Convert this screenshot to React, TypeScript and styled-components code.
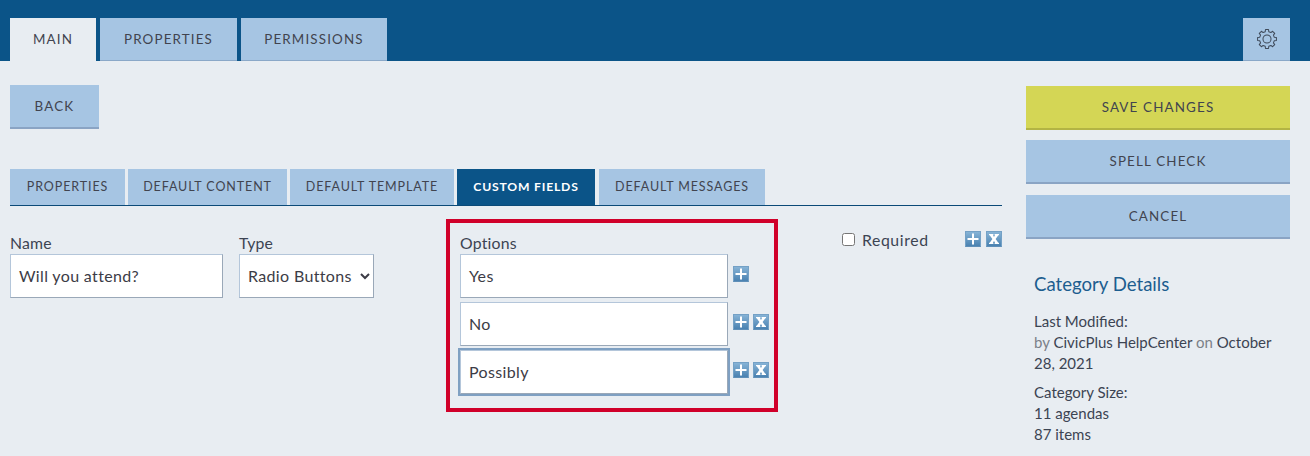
import React from "react";
import styled, { createGlobalStyle } from "styled-components";

const Global = createGlobalStyle`
  html, body { margin: 0; padding: 0; background: #e8edf2; }
  body { font-family: "Lato", "Open Sans", sans-serif; color: #3c3c46; }
  * { box-sizing: border-box; }
`;

const Page = styled.div`
  width: 1310px;
  height: 456px;
  overflow: hidden;
  background: #e8edf2;
`;

const Header = styled.header`
  height: 61px;
  background: #0b5488;
  padding: 18px 20px 0 10px;
  display: flex;
  align-items: flex-end;
  gap: 4px;
`;

const TopTab = styled.div<{ $active?: boolean; $w: number }>`
  height: 43px;
  width: ${(p) => p.$w}px;
  display: flex;
  align-items: center;
  justify-content: center;
  font-size: 13.4px;
  letter-spacing: 1.15px;
  color: #41444f;
  background: ${(p) => (p.$active ? "#e8edf2" : "#a6c5e3")};
  border-bottom: 1px solid ${(p) => (p.$active ? "#e8edf2" : "#8aa8c8")};
`;

const GearTab = styled.div`
  margin-left: auto;
  width: 47px;
  height: 43px;
  display: flex;
  align-items: center;
  justify-content: center;
  background: #a6c5e3;
  border-bottom: 1px solid #8aa8c8;
  color: #3f4a5a;
`;

const Content = styled.div`
  display: flex;
  padding: 24px 20px 0 10px;
`;

const Main = styled.main`
  width: 992px;
`;

const Side = styled.aside`
  margin-left: 24px;
  width: 264px;
  padding-top: 1px;
  display: flex;
  flex-direction: column;
`;

const ActionButton = styled.div<{ $tone?: string; $w?: number; $mb?: number }>`
  height: 44px;
  width: ${(p) => (p.$w ? `${p.$w}px` : "100%")};
  margin-bottom: ${(p) => p.$mb ?? 0}px;
  display: flex;
  align-items: center;
  justify-content: center;
  font-size: 13.4px;
  letter-spacing: 1.15px;
  color: #41444f;
  background: ${(p) => (p.$tone === "save" ? "#d4d655" : "#a6c5e3")};
  border-bottom: 2px solid ${(p) => (p.$tone === "save" ? "#b3b444" : "#8aa4c4")};
`;

const SubTabs = styled.div`
  margin-top: 40px;
  display: flex;
  gap: 3px;
  height: 37px;
  border-bottom: 1px solid #0b4a78;
`;

const SubTab = styled.div<{ $w: number; $active?: boolean; $ml?: number }>`
  height: 36px;
  width: ${(p) => p.$w}px;
  margin-left: ${(p) => p.$ml ?? 0}px;
  padding-bottom: 2px;
  display: flex;
  align-items: center;
  justify-content: center;
  font-size: ${(p) => (p.$active ? "12.2px" : "12.5px")};
  letter-spacing: ${(p) => (p.$active ? "0.8px" : "0.9px")};
  font-weight: ${(p) => (p.$active ? 700 : 400)};
  color: ${(p) => (p.$active ? "#ffffff" : "#41444f")};
  background: ${(p) => (p.$active ? "#0b5488" : "#a6c5e3")};
`;

const Fields = styled.div`
  display: flex;
  align-items: flex-start;
  margin-top: 13px;
`;

const Column = styled.div<{ $w: number; $ml?: number }>`
  width: ${(p) => p.$w}px;
  margin-left: ${(p) => p.$ml ?? 0}px;
  padding-top: 13px;
`;

const Label = styled.div`
  font-size: 15.8px;
  letter-spacing: 0.2px;
  line-height: 22px;
  color: #3c4452;
`;

const TextBox = styled.div<{ $focus?: boolean }>`
  height: 44px;
  width: 100%;
  background: #fff;
  display: flex;
  align-items: center;
  padding: 0 0 2px 8px;
  font-size: 16px;
  letter-spacing: 0.35px;
  color: #3c3c46;
  border: 1px solid #b4c6da;
  border-bottom-color: #9aa8b8;
  border-right-color: #9aa8b8;
  outline: ${(p) => (p.$focus ? "2px solid #7fa0c2" : "none")};
`;

const TypeSelect = styled.select`
  height: 44px;
  width: 100%;
  background: #fff;
  padding: 0 0 2px 4px;
  font-family: inherit;
  font-size: 16px;
  letter-spacing: 0.35px;
  color: #3c3c46;
  border: 1px solid #b4c6da;
  border-bottom-color: #9aa8b8;
  border-right-color: #9aa8b8;
  border-radius: 0;
`;

const OptionsBox = styled.div`
  margin-left: 72px;
  width: 332px;
  height: 193px;
  border: 4px solid #d0002a;
  padding: 9px 0 0 10px;
`;

const OptionRow = styled.div`
  display: flex;
  align-items: center;
  height: 44px;
  margin-bottom: 4px;
`;

const OptionField = styled.div`
  width: 268px;
  margin-right: 5px;
`;

const Icons = styled.div<{ $gap?: number; $lift?: number }>`
  display: flex;
  gap: ${(p) => p.$gap ?? 4}px;
  margin-bottom: ${(p) => p.$lift ?? 4}px;
`;

const IconButton = styled.span`
  width: 16px;
  height: 16px;
  display: block;
  background: linear-gradient(#86b3d6, #4a82b1);
  border: 1px solid #74a1c6;
  border-bottom-color: #5f8fb8;
  color: #fff;
`;

const RequiredWrap = styled.div`
  margin-left: 64px;
  width: 160px;
  height: 24px;
  margin-top: 8px;
  display: flex;
  align-items: center;
`;

const Check = styled.input`
  margin: 0 7px 0 0;
  width: 13px;
  height: 13px;
`;

const RequiredLabel = styled.span`
  font-size: 15.8px;
  letter-spacing: 0.6px;
  color: #3c4452;
  margin-right: auto;
`;

const Details = styled.div`
  margin-top: 33px;
  padding: 0 16px 0 8px;
`;

const DetailsTitle = styled.div`
  font-size: 18.6px;
  line-height: 24px;
  color: #1c5d8f;
  margin-bottom: 15px;
`;

const Para = styled.div`
  font-size: 15px;
  line-height: 21px;
  color: #3c4452;
  margin-bottom: 8px;
`;

const Muted = styled.span`
  color: #7b8088;
`;

const gearPath = (() => {
  const teeth = 8;
  const pts: string[] = [];
  const step = (Math.PI * 2) / teeth;
  for (let i = 0; i < teeth; i++) {
    const a = i * step - Math.PI / 2;
    const at = (r: number, d: number) =>
      `${(12 + r * Math.cos(a + d)).toFixed(2)} ${(12 + r * Math.sin(a + d)).toFixed(2)}`;
    pts.push(`${i === 0 ? "M" : "L"}${at(8.2, -0.24)}`);
    pts.push(`L${at(10.4, -0.16)}`);
    pts.push(`L${at(10.4, 0.16)}`);
    pts.push(`L${at(8.2, 0.24)}`);
  }
  return pts.join(" ") + "Z";
})();

const Gear = () => (
  <svg width="22" height="22" viewBox="0 0 24 24" fill="none" stroke="currentColor" strokeWidth="1.1" strokeLinejoin="round">
    <path d={gearPath} />
    <circle cx="12" cy="12" r="4.4" />
  </svg>
);

const Plus = () => (
  <IconButton>
    <svg width="14" height="14" viewBox="0 0 14 14" style={{ display: "block" }}>
      <path d="M6 1.5h2V6h4.5v2H8v4.5H6V8H1.5V6H6z" fill="currentColor" />
    </svg>
  </IconButton>
);

const Cross = () => (
  <IconButton>
    <svg width="14" height="14" viewBox="0 0 14 14" style={{ display: "block" }}>
      <path d="M2 2h4.4v1.3H5.9L7 5l1.1-1.7h-.5V2H12v1.3h-.7L8.6 7l2.7 3.7h.7V12H7.6v-1.3h.5L7 9l-1.1 1.7h.5V12H2v-1.3h.7L5.4 7 2.7 3.3H2z" fill="currentColor" />
    </svg>
  </IconButton>
);

export default function App() {
  return (
    <Page>
      <Global />
      <Header>
        <TopTab $w={86} $active>MAIN</TopTab>
        <TopTab $w={137}>PROPERTIES</TopTab>
        <TopTab $w={146}>PERMISSIONS</TopTab>
        <GearTab><Gear /></GearTab>
      </Header>
      <Content>
        <Main>
          <ActionButton $w={89}>BACK</ActionButton>
          <SubTabs>
            <SubTab $w={115}>PROPERTIES</SubTab>
            <SubTab $w={159}>DEFAULT CONTENT</SubTab>
            <SubTab $w={164}>DEFAULT TEMPLATE</SubTab>
            <SubTab $w={138} $active>CUSTOM FIELDS</SubTab>
            <SubTab $w={166} $ml={1}>DEFAULT MESSAGES</SubTab>
          </SubTabs>
          <Fields>
            <Column $w={213}>
              <Label>Name</Label>
              <TextBox>Will you attend?</TextBox>
            </Column>
            <Column $w={135} $ml={16}>
              <Label>Type</Label>
              <TypeSelect defaultValue="Radio Buttons">
                <option>Radio Buttons</option>
              </TypeSelect>
            </Column>
            <OptionsBox>
              <Label>Options</Label>
              <OptionRow>
                <OptionField><TextBox>Yes</TextBox></OptionField>
                <Icons><Plus /></Icons>
              </OptionRow>
              <OptionRow>
                <OptionField><TextBox>No</TextBox></OptionField>
                <Icons><Plus /><Cross /></Icons>
              </OptionRow>
              <OptionRow>
                <OptionField><TextBox $focus>Possibly</TextBox></OptionField>
                <Icons><Plus /><Cross /></Icons>
              </OptionRow>
            </OptionsBox>
            <RequiredWrap>
              <Check type="checkbox" />
              <RequiredLabel>Required</RequiredLabel>
              <Icons $gap={5} $lift={0}><Plus /><Cross /></Icons>
            </RequiredWrap>
          </Fields>
        </Main>
        <Side>
          <ActionButton $tone="save" $mb={10}>SAVE CHANGES</ActionButton>
          <ActionButton $mb={11}>SPELL CHECK</ActionButton>
          <ActionButton>CANCEL</ActionButton>
          <Details>
            <DetailsTitle>Category Details</DetailsTitle>
            <Para>
              Last Modified:<br />
              <Muted>by</Muted> CivicPlus HelpCenter <Muted>on</Muted> October 28, 2021
            </Para>
            <Para>
              Category Size:<br />
              11 agendas<br />
              87 items
            </Para>
          </Details>
        </Side>
      </Content>
    </Page>
  );
}
